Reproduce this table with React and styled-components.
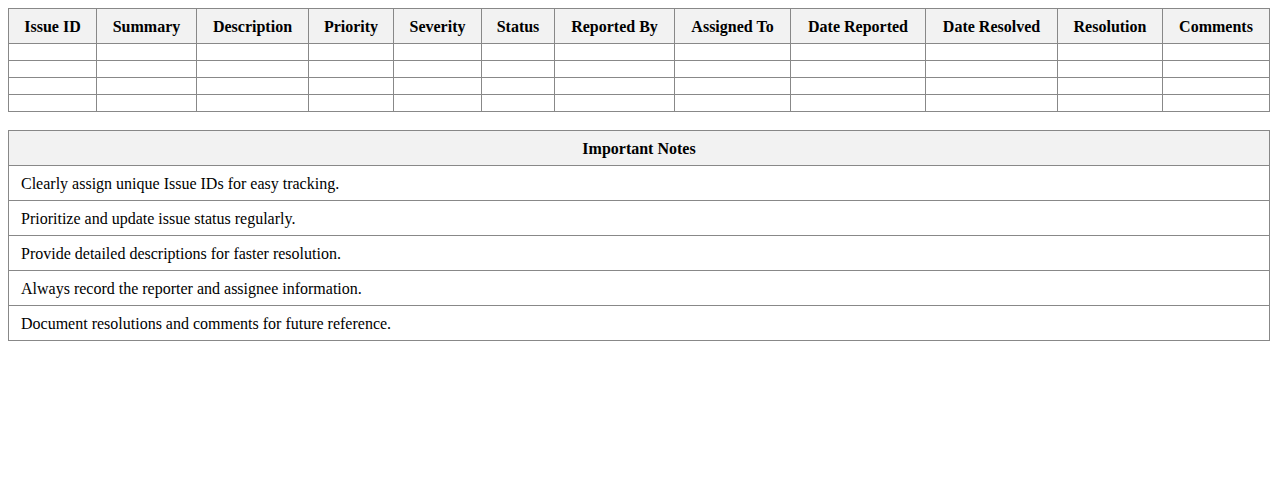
import styled, { createGlobalStyle } from "styled-components";

const GlobalStyle = createGlobalStyle`
    body {
        margin: 8px;
        background: #ffffff;
        color: #000000;
        font-family: "Liberation Serif", "Times New Roman", serif;
        font-size: 16px;
    }
`

const columns = [
    { name: "Issue ID", width: 88 },
    { name: "Summary", width: 100 },
    { name: "Description", width: 112 },
    { name: "Priority", width: 85 },
    { name: "Severity", width: 88 },
    { name: "Status", width: 73 },
    { name: "Reported By", width: 120 },
    { name: "Assigned To", width: 116 },
    { name: "Date Reported", width: 135 },
    { name: "Date Resolved", width: 132 },
    { name: "Resolution", width: 105 },
    { name: "Comments" },
]

const notes = [
    "Clearly assign unique Issue IDs for easy tracking.",
    "Prioritize and update issue status regularly.",
    "Provide detailed descriptions for faster resolution.",
    "Always record the reporter and assignee information.",
    "Document resolutions and comments for future reference.",
]

export default function App() {

    return (
        <>
            <GlobalStyle />
            <StyledTable $gap={18} $fixed>
                <colgroup>
                    {columns.map((c) => (
                        <StyledCol key={c.name} $width={c.width} />
                    ))}
                </colgroup>
                <thead>
                    <tr>
                        {columns.map((c) => (
                            <StyledTh key={c.name}>{c.name}</StyledTh>
                        ))}
                    </tr>
                </thead>
                <tbody>
                    {[0, 1, 2, 3].map((r) => (
                        <tr key={r}>
                            {columns.map((c) => (
                                <StyledTd key={c.name}></StyledTd>
                            ))}
                        </tr>
                    ))}
                </tbody>
            </StyledTable>

            <StyledTable>
                <thead>
                    <tr>
                        <StyledTh>Important Notes</StyledTh>
                    </tr>
                </thead>
                <tbody>
                    {notes.map((n) => (
                        <tr key={n}>
                            <StyledNote>{n}</StyledNote>
                        </tr>
                    ))}
                </tbody>
            </StyledTable>
        </>
    )
}

const StyledTable = styled.table`

    width: 100%;
    border-collapse: collapse;
    table-layout: ${(p) => (p.$fixed ? "fixed" : "auto")};
    margin-bottom: ${(p) => p.$gap || 0}px;

`

const StyledCol = styled.col`

    width: ${(p) => (p.$width ? `${p.$width}px` : "auto")};

`

const StyledTh = styled.th`

    border: 1px solid #888888;
    background-color: #f2f2f2;
    padding: 9px 8px 7px;
    font-weight: bold;
    text-align: center;
    line-height: 18px;

`

const StyledTd = styled.td`

    border: 1px solid #888888;
    padding: 8px;

`

const StyledNote = styled.td`

    border: 1px solid #888888;
    padding: 9px 12px 7px;
    text-align: left;
    line-height: 18px;

`
